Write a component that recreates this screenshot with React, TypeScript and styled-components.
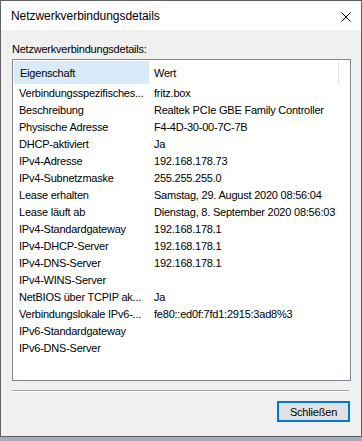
import React from "react";
import styled, { createGlobalStyle } from "styled-components";

const Global = createGlobalStyle`
  html, body { margin: 0; padding: 0; }
  body { background: #a4adbb; width: 362px; height: 441px; overflow: hidden; }
`;

const Window = styled.div`
  box-sizing: border-box;
  width: 362px;
  height: 437px;
  border: 1px solid #5f6063;
  background: #f0f0f0;
  display: flex;
  flex-direction: column;
  font-family: "Liberation Sans", Arial, sans-serif;
  color: #000;
`;

const TitleBar = styled.div`
  height: 30px;
  background: #fff;
  display: flex;
  align-items: center;
  justify-content: space-between;
  padding: 0 10px 0 10px;
`;

const Title = styled.div`
  font-size: 12px;
  letter-spacing: -0.05px;
`;

const Close = styled.svg`
  width: 10px;
  height: 10px;
  margin-top: 2px;
`;

const Body = styled.div`
  flex: 1;
  display: flex;
  flex-direction: column;
  padding: 13px 11px 14px 11px;
  font-size: 11px;
  letter-spacing: -0.22px;
`;

const Label = styled.div`
  line-height: 13px;
  margin-bottom: 3px;
`;

const ListBox = styled.div`
  box-sizing: border-box;
  height: 322px;
  width: 339px;
  border: 1px solid #828790;
  background: #fff;
  padding: 1px;
`;

const Row = styled.div<{ $header?: boolean }>`
  display: grid;
  grid-template-columns: 135px 190px;
  height: ${(p) => (p.$header ? "23px" : "17px")};
  align-items: center;
`;

const Cell = styled.div<{ $header?: boolean; $active?: boolean }>`
  height: 100%;
  display: flex;
  align-items: center;
  padding-left: ${(p) => (p.$active ? "6px" : "5px")};
  white-space: nowrap;
  overflow: ${(p) => (p.$header ? "hidden" : "visible")};
  background: ${(p) => (p.$active ? "#d9ebf9" : "transparent")};
  border-right: ${(p) => (p.$header && !p.$active ? "1px solid #e5e5e5" : "none")};
  box-sizing: border-box;
`;

const Separator = styled.div`
  margin-top: 9px;
  height: 1px;
  width: 337px;
  background: #a0a0a0;
  border-bottom: 1px solid #fff;
`;

const Footer = styled.div`
  display: flex;
  justify-content: flex-end;
  margin-top: 9px;
`;

const Button = styled.button`
  box-sizing: border-box;
  width: 73px;
  height: 21px;
  border: 2px solid #0078d7;
  background: #e1e1e1;
  font-family: "Liberation Sans", Arial, sans-serif;
  font-size: 11px;
  letter-spacing: -0.2px;
  color: #000;
  padding: 0;
`;

const rows: [string, string][] = [
  ["Verbindungsspezifisches...", "fritz.box"],
  ["Beschreibung", "Realtek PCIe GBE Family Controller"],
  ["Physische Adresse", "F4-4D-30-00-7C-7B"],
  ["DHCP-aktiviert", "Ja"],
  ["IPv4-Adresse", "192.168.178.73"],
  ["IPv4-Subnetzmaske", "255.255.255.0"],
  ["Lease erhalten", "Samstag, 29. August 2020 08:56:04"],
  ["Lease läuft ab", "Dienstag, 8. September 2020 08:56:03"],
  ["IPv4-Standardgateway", "192.168.178.1"],
  ["IPv4-DHCP-Server", "192.168.178.1"],
  ["IPv4-DNS-Server", "192.168.178.1"],
  ["IPv4-WINS-Server", ""],
  ["NetBIOS über TCPIP ak...", "Ja"],
  ["Verbindungslokale IPv6-...", "fe80::ed0f:7fd1:2915:3ad8%3"],
  ["IPv6-Standardgateway", ""],
  ["IPv6-DNS-Server", ""],
];

export default function App() {
  return (
    <>
      <Global />
      <Window>
        <TitleBar>
          <Title>Netzwerkverbindungsdetails</Title>
          <Close viewBox="0 0 10 10">
            <path d="M0.5 0.5 L9.5 9.5 M9.5 0.5 L0.5 9.5" stroke="#000" strokeWidth="1" fill="none" />
          </Close>
        </TitleBar>
        <Body>
          <Label>Netzwerkverbindungsdetails:</Label>
          <ListBox>
            <Row $header>
              <Cell $header $active>Eigenschaft</Cell>
              <Cell $header>Wert</Cell>
            </Row>
            {rows.map(([k, v]) => (
              <Row key={k}>
                <Cell>{k}</Cell>
                <Cell>{v}</Cell>
              </Row>
            ))}
          </ListBox>
          <Separator />
          <Footer>
            <Button>Schließen</Button>
          </Footer>
        </Body>
      </Window>
    </>
  );
}
